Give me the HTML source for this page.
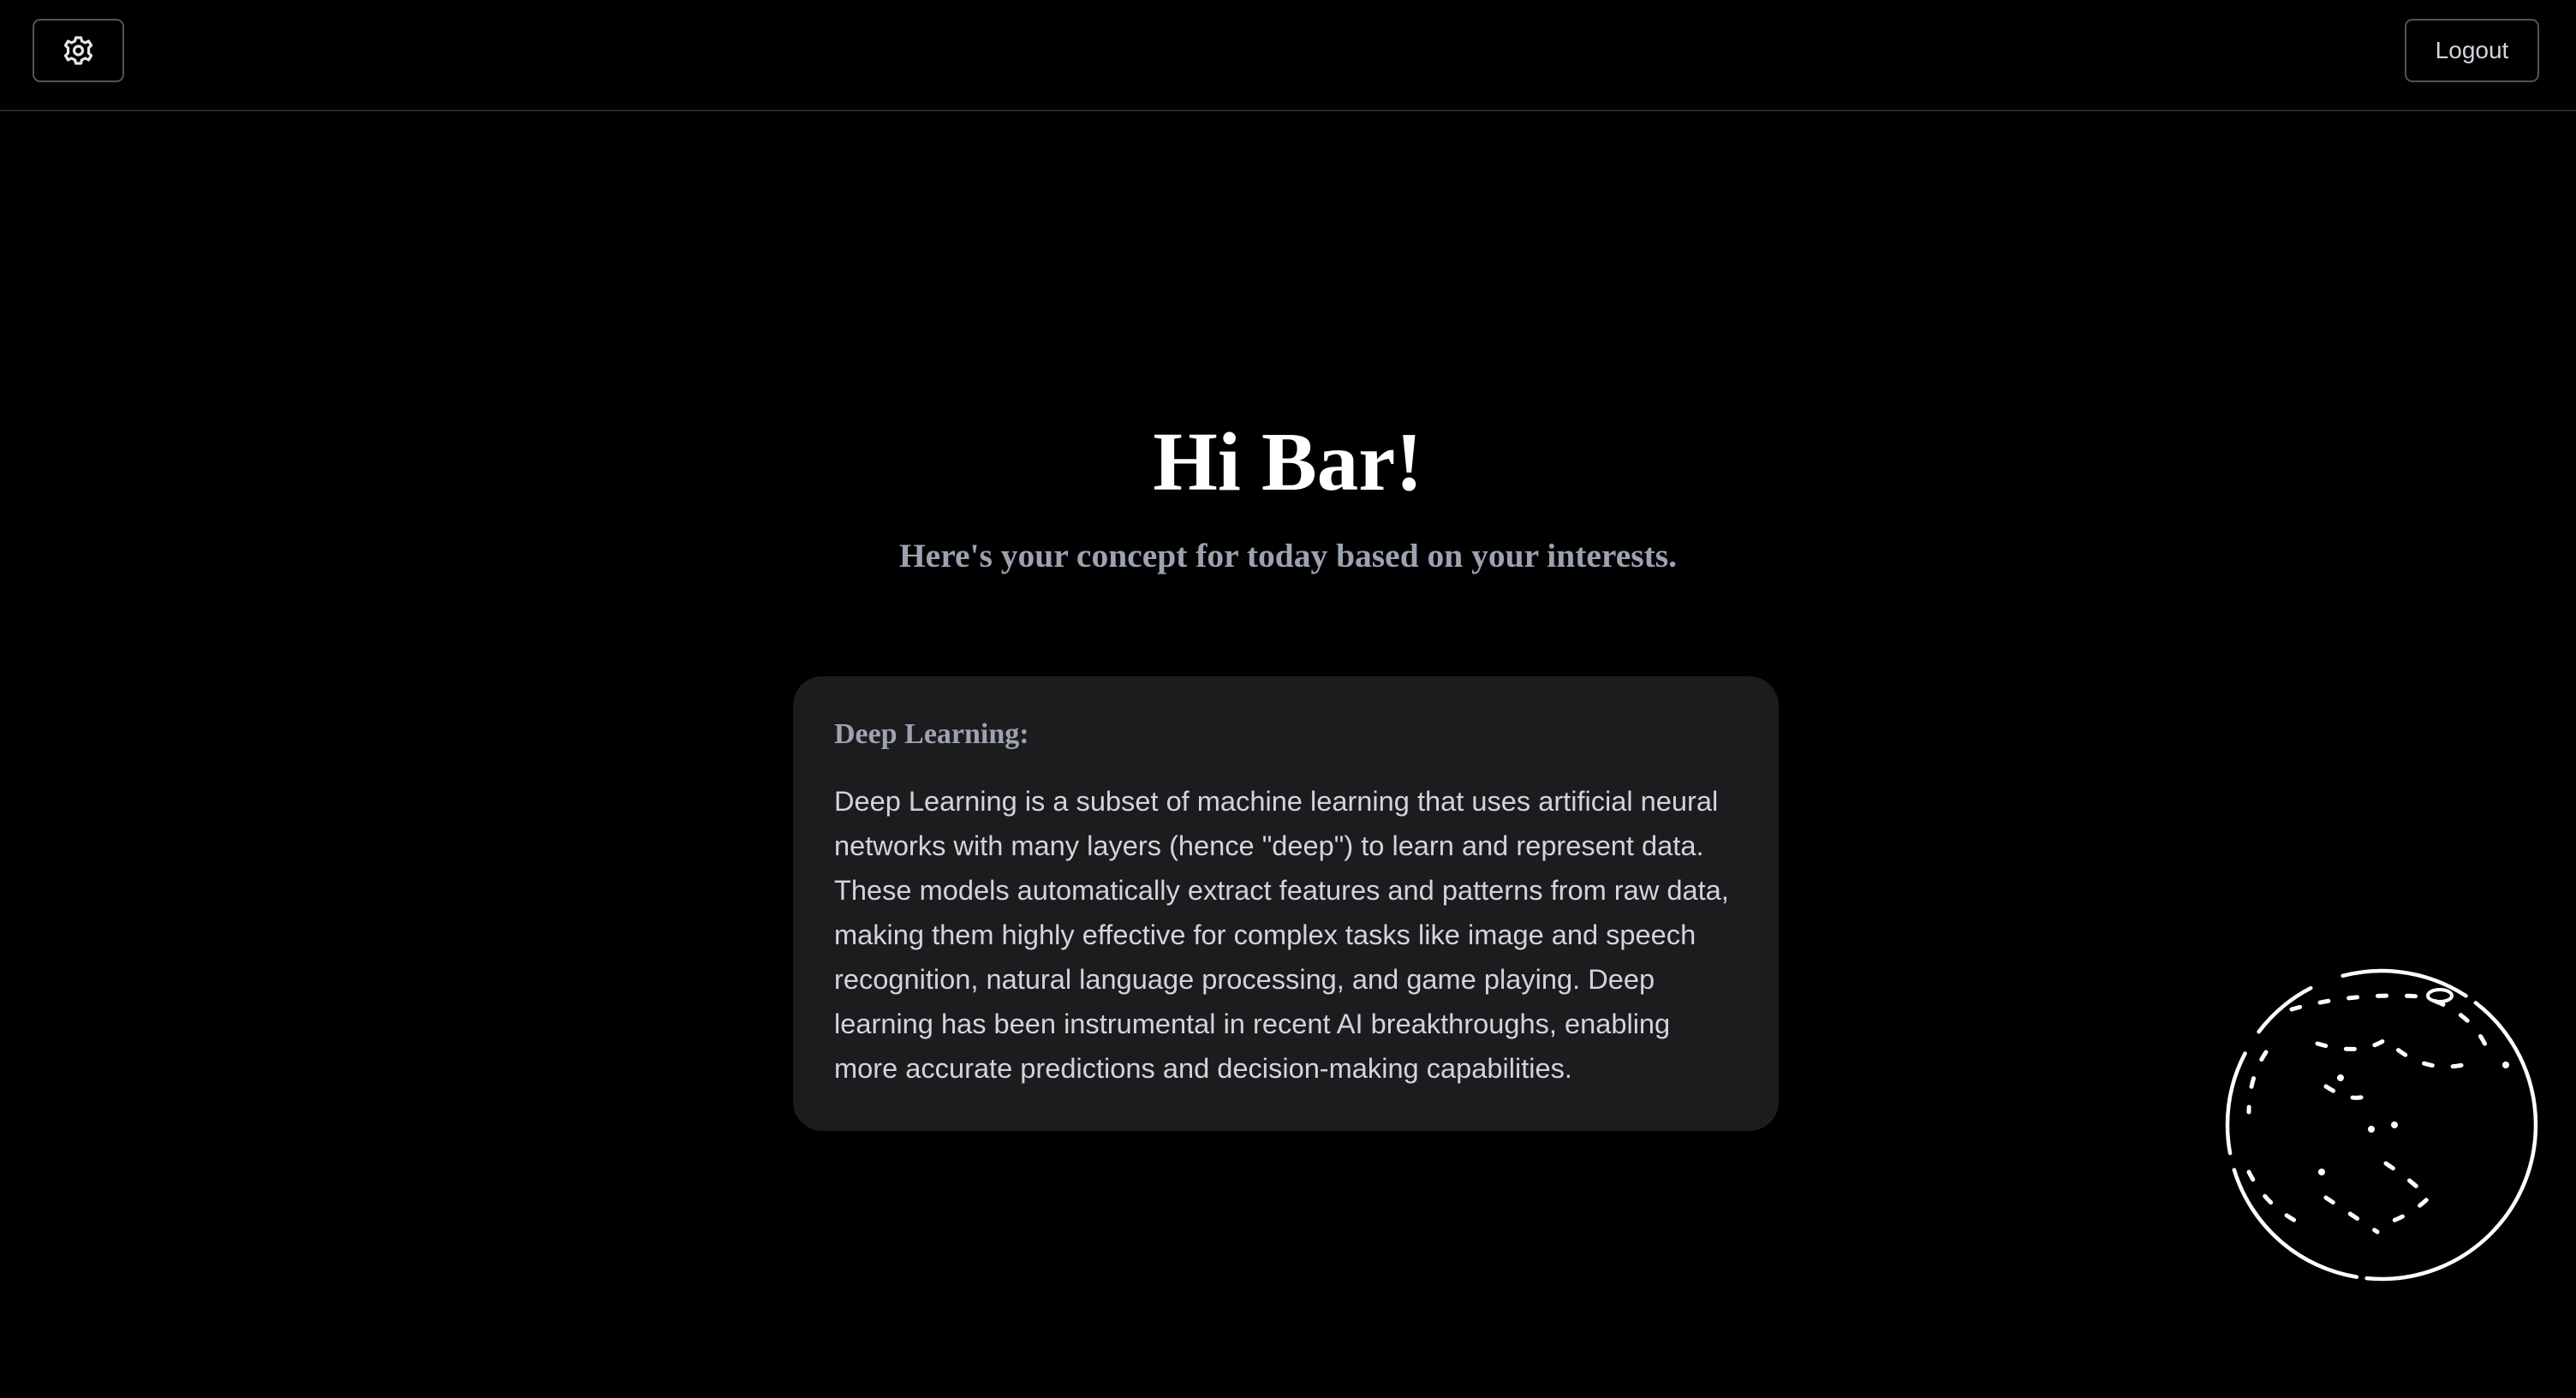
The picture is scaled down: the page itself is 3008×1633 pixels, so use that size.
<!DOCTYPE html>
<html><head><meta charset="utf-8"><style>
html,body{margin:0;padding:0;background:#000;width:3008px;height:1633px;overflow:hidden;position:relative;font-family:"Liberation Sans",sans-serif}
.hdr{position:absolute;left:0;top:0;width:3008px;height:128px;border-bottom:2px solid #262626}
.btn{position:absolute;box-sizing:border-box;border:2px solid #4b5563;border-radius:9px;top:22px;height:74px}
.gear{left:38px;width:107px}
.logout{left:2808px;width:157px;color:#d1d5db;font-size:28px;line-height:70px;text-align:center}
h1{position:absolute;left:0;width:3008px;top:480px;margin:0;text-align:center;font-family:"Liberation Serif",serif;font-weight:bold;font-size:97px;color:#fff;line-height:120px}
.sub{position:absolute;left:0;width:3008px;top:624px;text-align:center;font-family:"Liberation Serif",serif;font-weight:bold;font-size:39.5px;color:#9ca3af;line-height:50px}
.card{position:absolute;left:926px;top:790px;width:1151px;height:531px;background:#1c1c1e;border-radius:34px}
.ct{position:absolute;left:48px;top:49px;font-family:"Liberation Serif",serif;font-weight:bold;font-size:34px;color:#9ca3af}
.cb{position:absolute;left:48px;top:120px;font-size:32.6px;color:#d1d5db;line-height:52px;white-space:nowrap}
</style></head><body>
<div class="hdr">
<div class="btn gear"><svg width="103" height="70" viewBox="0 0 103 70"><g transform="translate(51.5,35)" fill="none" stroke="#e5e7eb" stroke-width="3.2" stroke-linejoin="round"><path d="M-3,-15 L3,-15 L4,-11 L8,-9 L12,-11 L15,-6 L12,-3 L12,3 L15,6 L12,11 L8,9 L4,11 L3,15 L-3,15 L-4,11 L-8,9 L-12,11 L-15,6 L-12,3 L-12,-3 L-15,-6 L-12,-11 L-8,-9 L-4,-11 Z"/><circle r="5"/></g></svg></div>
<div class="btn logout">Logout</div>
</div>
<h1>Hi Bar!</h1>
<div class="sub">Here's your concept for today based on your interests.</div>
<div class="card">
<div class="ct">Deep Learning:</div>
<div class="cb">Deep Learning is a subset of machine learning that uses artificial neural<br>networks with many layers (hence "deep") to learn and represent data.<br>These models automatically extract features and patterns from raw data,<br>making them highly effective for complex tasks like image and speech<br>recognition, natural language processing, and game playing. Deep<br>learning has been instrumental in recent AI breakthroughs, enabling<br>more accurate predictions and decision-making capabilities.</div>
</div>
<svg style="position:absolute;left:2586px;top:1119px" width="390" height="390" viewBox="0 0 390 390">
<g fill="none" stroke="#fff" stroke-linecap="round">
<circle cx="195" cy="195" r="180" stroke-width="4.5" stroke-dasharray="300 12 200 20 120 30 80 40 150 14"/>
<g stroke-width="5" stroke-dasharray="10 24">
<path d="M90,60 Q160,40 240,45 Q300,60 320,110"/>
<path d="M120,100 Q170,115 200,95 Q240,135 290,125"/>
<path d="M130,150 Q160,170 180,160"/>
<path d="M200,240 Q230,260 250,280 Q230,300 200,310"/>
<path d="M130,280 Q160,300 190,320"/>
<path d="M40,250 Q60,290 100,310"/>
<path d="M60,110 Q40,140 40,180"/>
</g>
<ellipse cx="263" cy="44" rx="14" ry="7" stroke-width="4"/>
</g>
<g fill="#fff">
<circle cx="183" cy="200" r="4"/><circle cx="210" cy="195" r="4"/><circle cx="147" cy="140" r="4"/><circle cx="340" cy="125" r="4"/><circle cx="125" cy="250" r="4"/>
</g>
</svg>
</body></html>
